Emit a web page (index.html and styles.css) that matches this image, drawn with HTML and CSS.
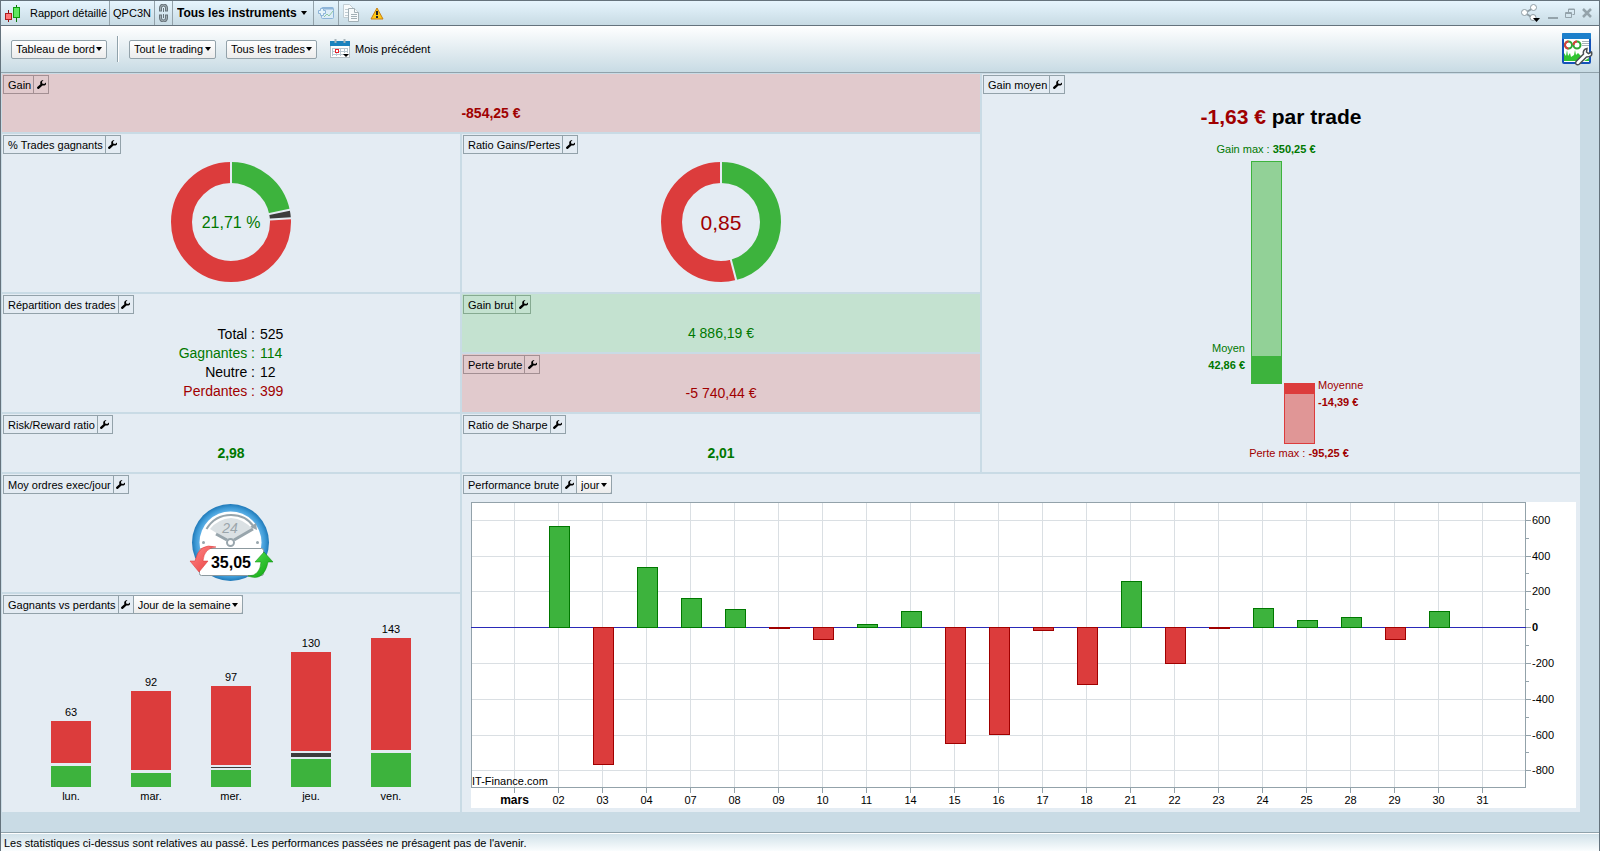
FILE: index.html
```html
<!DOCTYPE html>
<html lang="fr">
<head>
  <meta charset="UTF-8">
  <meta name="viewport" content="width=device-width, initial-scale=1.0">
  <title>Rapport détaillé</title>
  <link rel="stylesheet" href="styles.css">
</head>
<body>

<svg class="defs" aria-hidden="true">
  <symbol id="wrench" viewBox="0 0 9 9">
    <path d="M6.500 0L5 1.700 5.200 3.500 7.200 4 9 2.500Q9.500 5 7.500 5.500L5.500 5.500 2 8.800Q1 9.300 0.300 8.600 -0.300 7.800 0.300 7L3.400 4.200Q2.800 2 4 1 5 0 6.500 0Z"/>
  </symbol>
</svg>

<header class="titlebar">
  <div class="cell title">
    <svg width="16" height="17" viewBox="0 0 16 17">
      <path d="M3.500 5v12" stroke="#8c1010"/>
      <rect x="0.500" y="8.500" width="6" height="6" fill="#f77" stroke="#b01c1c"/>
      <path d="M11.500 0v17" stroke="#0b7a0b"/>
      <rect x="8.500" y="2.500" width="6" height="10" fill="#5fe85f" stroke="#109a10"/>
    </svg>
    <span>Rapport détaillé</span>
  </div>
  <div class="cell account">QPC3N</div>
  <button class="cell link" aria-label="Lier">
    <svg width="9" height="18" viewBox="0 0 9 18" fill="none">
      <path d="M1.500 7.500V4a3 3 0 0 1 6 0v3.500M1.500 10.500V14a3 3 0 0 0 6 0v-3.500" stroke="#68747b" stroke-width="3"/>
      <path d="M4.500 4v4M4.500 10v4" stroke="#68747b"/>
      <path d="M1.500 6.500V4a3 3 0 0 1 6 0v2.500M1.500 11.500V14a3 3 0 0 0 6 0v-2.500" stroke="#a5b0b6"/>
    </svg>
  </button>
  <label class="cell picker instruments">
    <select aria-label="Instruments"><option>Tous les instruments</option></select>
  </label>
  <button class="cell addchart" aria-label="Ajouter un graphique">
    <svg width="16" height="13" viewBox="0 0 16 13">
      <rect x="3.500" y="0.500" width="12" height="11" rx="1" fill="#dcecf8" stroke="#8db4d8"/>
      <path d="M4 1.500h11" stroke="#8db4d8" stroke-width="2"/>
      <path d="M6 10l3-3 2 2 4-5" stroke="#8fc7a2" fill="none"/>
      <path d="M2.500 3.500v-2h3v2h2v3h-2v2h-3v-2h-2v-3z" fill="#e6f4fb" stroke="#8db4d8"/>
    </svg>
  </button>
  <div class="cell tools">
    <button aria-label="Copier">
      <svg width="17" height="18" viewBox="0 0 17 18" fill="#f8fbfc" stroke="#a3b0b6">
        <path d="M0.500 0.500h6l4 4v9h-10z" stroke="#c2ced4"/>
        <path d="M2 5.500h5M2 8.500h4M2 11.500h3" stroke="#c2ced4"/>
        <path d="M5.500 4.500h6l4 4v9h-10z"/>
        <path d="M11.500 4.500v4h4M8 10.500h6M8 12.500h6M8 14.500h6"/>
      </svg>
    </button>
    <button aria-label="Avertissement">
      <svg width="14" height="13" viewBox="0 0 14 13">
        <path d="M7 1L13 12H1Z" fill="#ffc814" stroke="#c87f12" stroke-linejoin="round"/>
        <path d="M7 4v4M7 9v2" stroke="#222" stroke-width="2"/>
      </svg>
    </button>
  </div>
  <div class="window-buttons">
    <button aria-label="Partager">
      <svg width="20" height="18" viewBox="0 0 20 18">
        <path d="M4 9L13 3.500M4 9l8 5" stroke="#8f9da4" stroke-width="2"/>
        <g fill="#fff" stroke="#8f9da4"><circle cx="3.500" cy="8.500" r="3"/><circle cx="12.500" cy="3.500" r="3"/><circle cx="12" cy="13.500" r="3"/></g>
        <path d="M12 14h7l-3.500 4z" fill="#000"/>
      </svg>
    </button>
    <button aria-label="Réduire"><svg width="10" height="12"><path d="M0 11h10" stroke="#94a3ab" stroke-width="2"/></svg></button>
    <button aria-label="Restaurer">
      <svg width="10" height="11" viewBox="0 0 10 11" fill="none" stroke="#94a3ab"><path d="M3.500 4V1h6v5.500h-2M3 1.500h7M0.500 4.500h6v5h-6zM0 5.500h7"/></svg>
    </button>
    <button aria-label="Fermer"><svg width="10" height="10"><path d="M1 1l8 8M9 1l-8 8" stroke="#94a3ab" stroke-width="2.500"/></svg></button>
  </div>
</header>

<nav class="toolbar">
  <label class="picker box"><select aria-label="Vue"><option>Tableau de bord</option></select></label>
  <span class="separator"></span>
  <label class="picker box"><select aria-label="Trading"><option>Tout le trading</option></select></label>
  <label class="picker box"><select aria-label="Trades"><option>Tous les trades</option></select></label>
  <button class="period">
    <svg width="20" height="20" viewBox="0 0 20 20">
      <rect x="0.500" y="2.500" width="19" height="16" fill="#fff" stroke="#b4bfc5"/>
      <rect x="0" y="2" width="20" height="5" fill="#1c82bd"/>
      <path d="M5.500 0v4M14.500 0v4" stroke="#a9b6bc" stroke-width="2"/>
      <path d="M2 9.500h16M2 12.500h16M2 15.500h12M2.500 9v8M6.500 9v8M10.500 9v8M14.500 9v5M17.500 9v5" stroke="#b9c7d0"/>
      <rect x="5.500" y="10.500" width="3" height="3" fill="#fff" stroke="#e8232b"/>
      <path d="M13 15h6l-3 3z" fill="#000"/>
    </svg>
    <span>Mois précédent</span>
  </button>
  <button class="configure" aria-label="Configurer le rapport">
    <svg width="31" height="33" viewBox="0 0 31 33">
      <rect x="1" y="1" width="27" height="29" rx="1" fill="#fff" stroke="#1552b8" stroke-width="2"/>
      <rect x="0" y="0" width="29" height="6" rx="1" fill="#1b7fcb"/>
      <g fill="none" stroke-width="2">
        <circle cx="6.500" cy="12" r="3.500" stroke="#2fa834"/><path d="M6.500 15.500a3.500 3.500 0 0 1 0-7" stroke="#dc3c3c"/>
        <circle cx="15" cy="12" r="3.500" stroke="#2fa834"/><path d="M11.500 12a3.500 3.500 0 0 1 3.500-3.500" stroke="#dc3c3c"/>
      </g>
      <path d="M20 8.500h7M20 10.500h7M20 12.500h7" stroke="#a7b2b8"/>
      <path d="M2 28V20l2 3 1-6 1 6 2-3 1 4 3-2 1-5 1 5 2-2 3 3 2-1v6z" fill="#31c431"/>
      <path d="M22 28h5v-3z" fill="#31c431"/>
      <path d="M14.500 28L21.500 21Q20.500 16.500 25 15.500L24.500 19 26.500 20.500 29.500 19Q31 24 24.500 24L17.500 31Q15.500 32.500 14 31 13 29.500 14.500 28Z" fill="#fff" stroke="#4a4f52" stroke-width="1.500"/>
    </svg>
  </button>
</nav>

<main class="dashboard">
  <section class="panel gain loss">
    <div class="tab"><h2>Gain</h2><button aria-label="Options"><svg><use href="#wrench"/></svg></button></div>
    <p class="value strong red">-854,25 €</p>
  </section>

  <section class="panel average">
    <div class="tab"><h2>Gain moyen</h2><button aria-label="Options"><svg><use href="#wrench"/></svg></button></div>
    <p class="headline"><span class="red">-1,63 €</span> par trade</p>
    <svg class="average-chart" width="200" height="320" viewBox="-2 0 200 320">
      <g class="green">
        <text x="83" y="11" text-anchor="middle">Gain max : <tspan class="bold">350,25 €</tspan></text>
        <rect x="68.500" y="19.500" width="30" height="222" fill="#92d197" stroke="#3db33d"/>
        <rect x="68" y="214" width="31" height="28" fill="#3db33d"/>
        <text x="62" y="210" text-anchor="end">Moyen</text>
        <text x="62" y="227" text-anchor="end" class="bold">42,86 €</text>
      </g>
      <g class="red">
        <rect x="101.500" y="241.500" width="30" height="60" fill="#e09696" stroke="#dc3c3c"/>
        <rect x="101" y="241" width="31" height="11" fill="#dc3c3c"/>
        <text x="135" y="247">Moyenne</text>
        <text x="135" y="264" class="bold">-14,39 €</text>
        <text x="116" y="315" text-anchor="middle">Perte max : <tspan class="bold">-95,25 €</tspan></text>
      </g>
    </svg>
  </section>

  <section class="panel winrate">
    <div class="tab"><h2>% Trades gagnants</h2><button aria-label="Options"><svg><use href="#wrench"/></svg></button></div>
    <svg class="donut" width="120" height="120" viewBox="-60 -60 120 120">
      <g transform="rotate(-90)" fill="none" stroke-width="21">
        <circle r="49.500" stroke="#3db33d" pathLength="100" stroke-dasharray="21.710 78.290"/>
        <circle r="49.500" stroke="#3c3c3c" pathLength="100" stroke-dasharray="2.290 97.710" stroke-dashoffset="-21.710"/>
        <circle r="49.500" stroke="#dc3c3c" pathLength="100" stroke-dasharray="76 24" stroke-dashoffset="-24"/>
      </g>
      <path d="M0 0V-61M0 0L59.700-12.500M0 0L60.900-3.800" stroke="#e4ecf3" stroke-width="2"/>
      <text class="green" y="6" text-anchor="middle" font-size="16">21,71 %</text>
    </svg>
  </section>

  <section class="panel ratio">
    <div class="tab"><h2>Ratio Gains/Pertes</h2><button aria-label="Options"><svg><use href="#wrench"/></svg></button></div>
    <svg class="donut" width="120" height="120" viewBox="-60 -60 120 120">
      <g transform="rotate(-90)" fill="none" stroke-width="21">
        <circle r="49.500" stroke="#3db33d" pathLength="100" stroke-dasharray="45.950 54.050"/>
        <circle r="49.500" stroke="#dc3c3c" pathLength="100" stroke-dasharray="54.050 45.950" stroke-dashoffset="-45.950"/>
      </g>
      <path d="M0 0V-61M0 0L15.400 59" stroke="#e4ecf3" stroke-width="2"/>
      <text class="red" y="8" text-anchor="middle" font-size="21">0,85</text>
    </svg>
  </section>

  <section class="panel split">
    <div class="tab"><h2>Répartition des trades</h2><button aria-label="Options"><svg><use href="#wrench"/></svg></button></div>
    <table class="counts">
      <tr><th>Total :</th><td>525</td></tr>
      <tr class="green"><th>Gagnantes :</th><td>114</td></tr>
      <tr><th>Neutre :</th><td>12</td></tr>
      <tr class="red"><th>Perdantes :</th><td>399</td></tr>
    </table>
  </section>

  <section class="panel gross-gain win">
    <div class="tab"><h2>Gain brut</h2><button aria-label="Options"><svg><use href="#wrench"/></svg></button></div>
    <p class="value green">4 886,19 €</p>
  </section>

  <section class="panel gross-loss loss">
    <div class="tab"><h2>Perte brute</h2><button aria-label="Options"><svg><use href="#wrench"/></svg></button></div>
    <p class="value red">-5 740,44 €</p>
  </section>

  <section class="panel risk">
    <div class="tab"><h2>Risk/Reward ratio</h2><button aria-label="Options"><svg><use href="#wrench"/></svg></button></div>
    <p class="value strong green">2,98</p>
  </section>

  <section class="panel sharpe">
    <div class="tab"><h2>Ratio de Sharpe</h2><button aria-label="Options"><svg><use href="#wrench"/></svg></button></div>
    <p class="value strong green">2,01</p>
  </section>

  <section class="panel orders">
    <div class="tab"><h2>Moy ordres exec/jour</h2><button aria-label="Options"><svg><use href="#wrench"/></svg></button></div>
    <svg class="clock" width="90" height="80" viewBox="0 0 90 80">
      <defs>
        <radialGradient id="ring"><stop offset="0.800" stop-color="#5fb0e6"/><stop offset="0.900" stop-color="#3d9ad6"/><stop offset="1" stop-color="#2079b8"/></radialGradient>
        <linearGradient id="down" x2="1" y2="1"><stop offset="0" stop-color="#ff8a8a"/><stop offset="1" stop-color="#e83c3c"/></linearGradient>
        <linearGradient id="up" x2="1" y2="1"><stop offset="0" stop-color="#58e358"/><stop offset="1" stop-color="#08a008"/></linearGradient>
      </defs>
      <circle cx="44.500" cy="40.500" r="38.500" fill="url(#ring)"/>
      <circle cx="44.500" cy="40.500" r="31" fill="#fff"/>
      <path d="M45 40L24 27Q32 17 45 16 58 17 66 27Z" fill="#dbe1e4"/>
      <path d="M20.500 27Q29 13 45 13 60 13 68 25" fill="none" stroke="#98a5ac" stroke-width="2"/>
      <path d="M64 25l7 3-1-7z" fill="#98a5ac"/>
      <text x="44" y="31" text-anchor="middle" font-size="14" class="hours">24</text>
      <path d="M30 32l11 6M48 38l19-11" stroke="#98a5ac" stroke-width="3"/>
      <circle cx="44.500" cy="40.500" r="3.500" fill="#fff" stroke="#98a5ac" stroke-width="2"/>
      <circle cx="17.500" cy="40.500" r="1.500" fill="#98a5ac"/>
      <circle cx="71.500" cy="40.500" r="1.500" fill="#98a5ac"/>
      <rect x="13.500" y="46.500" width="64" height="27" rx="2" fill="#fff" stroke="#8c999f"/>
      <path d="M30 45Q13 40 9 59L4 59 13 70 22 59 17 59Q18 46 30 45Z" fill="url(#down)" stroke="#d33" stroke-width="0.500"/>
      <path d="M62 74Q78 80 82 60L87 60 78 50 69 60 75 60Q74 74 62 74Z" fill="url(#up)" stroke="#0a8c0a" stroke-width="0.500"/>
      <text x="45" y="66" text-anchor="middle" font-size="16" class="bold">35,05</text>
    </svg>
  </section>

  <section class="panel weekdays">
    <div class="tab">
      <h2>Gagnants vs perdants</h2><button aria-label="Options"><svg><use href="#wrench"/></svg></button>
      <label class="picker box"><select aria-label="Regroupement"><option>Jour de la semaine</option></select></label>
    </div>
    <div class="weekday-chart" id="weekday-chart"></div>
  </section>

  <section class="panel performance">
    <div class="tab">
      <h2>Performance brute</h2><button aria-label="Options"><svg><use href="#wrench"/></svg></button>
      <label class="picker box"><select aria-label="Période"><option>jour</option></select></label>
    </div>
    <svg class="performance-chart" id="performance-chart" viewBox="0 0 1105 306"></svg>
  </section>
</main>

<footer class="status">Les statistiques ci-dessus sont relatives au passé. Les performances passées ne présagent pas de l'avenir.</footer>

<script src="charts.js"></script>
</body>
</html>
```
FILE: styles.css
```css
* {
  box-sizing: border-box;
}

body {
  margin: 0;
  min-height: 100vh;
  display: flex;
  flex-direction: column;
  border: 1px solid #65737d;
  border-bottom: 0;
  background: #c9dbe5;
  color: #000;
  font-family: "Liberation Sans", Arial, sans-serif;
  font-size: 11px;
  line-height: 14px;
}

h2,
p {
  margin: 0;
  font-size: inherit;
  font-weight: normal;
}

button {
  display: flex;
  align-items: center;
  padding: 0;
  border: 0;
  background: none;
  color: inherit;
  font: inherit;
}

svg {
  display: block;
  flex: none;
}

text {
  fill: currentColor;
}

.defs {
  position: absolute;
  width: 0;
  height: 0;
}

.bold {
  font-weight: bold;
}

.green {
  color: #007800;
}

.red {
  color: #a00000;
}

/* drop-downs */
.picker {
  position: relative;
  display: flex;
  align-items: center;
}

.picker::after {
  content: "";
  position: absolute;
  right: 4px;
  top: 50%;
  margin-top: -2px;
  border: 3px solid transparent;
  border-top: 4px solid #000;
  border-bottom: 0;
  pointer-events: none;
}

.picker select {
  appearance: none;
  height: 100%;
  padding: 0 11px 0 4px;
  border: 0;
  background: none;
  color: inherit;
  font: inherit;
}

.picker.box {
  height: 19px;
  border: 1px solid #93a2aa;
  border-radius: 2px;
  background: linear-gradient(#fff, #ececec);
}

/* title bar */
.titlebar {
  display: flex;
  height: 25px;
  border-bottom: 1px solid #65737d;
  background: linear-gradient(#e6f5fe, #c8dbe4);
}

.cell {
  display: flex;
  align-items: center;
  justify-content: center;
  border-right: 1px solid #93a2aa;
}

.title {
  gap: 9px;
  padding: 0 2px 0 4px;
}

.account {
  padding: 0 3px;
}

.link {
  width: 18px;
}

.instruments {
  font-size: 12px;
  font-weight: bold;
}

.instruments select {
  padding-right: 16px;
}

.instruments::after {
  right: 6px;
}

.addchart {
  width: 25px;
}

.tools {
  gap: 10px;
  padding-left: 4px;
  border: 0;
}

.window-buttons {
  display: flex;
  align-items: center;
  gap: 7px;
  margin-left: auto;
  padding-right: 7px;
}

/* toolbar */
.toolbar {
  display: flex;
  align-items: center;
  gap: 10px;
  height: 47px;
  padding: 0 6px 0 10px;
  border-bottom: 1px solid #90a2ab;
  background: linear-gradient(#fff, #c8dbe4);
}

.separator {
  width: 2px;
  height: 26px;
  border-left: 1px solid #90a2ab;
  background: #fff;
}

.period {
  gap: 5px;
  margin-left: 3px;
}

.configure {
  margin-left: auto;
}

/* dashboard */
.dashboard {
  flex: 1;
  display: grid;
  grid-template-columns: 458fr 518fr 598fr;
  grid-template-rows: 58px 158px 58px 58px 58px 118px minmax(218px, 1fr);
  grid-template-areas:
    "gain gain average"
    "winrate ratio average"
    "split ggain average"
    "split gloss average"
    "risk sharpe average"
    "orders perf perf"
    "week perf perf";
  gap: 2px;
  padding: 1px 19px 20px 1px;
}

.gain { grid-area: gain; }
.average { grid-area: average; }
.winrate { grid-area: winrate; }
.ratio { grid-area: ratio; }
.split { grid-area: split; }
.gross-gain { grid-area: ggain; }
.gross-loss { grid-area: gloss; }
.risk { grid-area: risk; }
.sharpe { grid-area: sharpe; }
.orders { grid-area: orders; }
.weekdays { grid-area: week; }
.performance { grid-area: perf; }

.panel {
  display: flex;
  flex-direction: column;
  align-items: center;
  min-width: 0;
  background: #e4ecf3;
  --line: #93a2aa;
}

.panel.loss {
  background: #e1cacd;
  --line: #a38f93;
}

.panel.win {
  background: #c4e2d0;
  --line: #86aa91;
}

.tab {
  display: flex;
  align-self: flex-start;
  height: 19px;
  margin: 1px 0 0 1px;
  border: 1px solid var(--line);
}

.tab h2 {
  padding: 2px 2px 0 4px;
}

.tab > button {
  justify-content: center;
  width: 15px;
  border-left: 1px solid var(--line);
}

.tab > button svg {
  width: 9px;
  height: 9px;
}

.tab .picker.box {
  margin: -1px;
  margin-left: 0;
  border-radius: 0 2px 2px 0;
}

.value {
  margin: auto;
  font-size: 14px;
  line-height: 18px;
}

.strong {
  font-weight: bold;
}

.donut,
.clock {
  margin-top: 8px;
}

.hours {
  color: #9aa5ab;
  font-style: italic;
}

.headline {
  margin: 11px 0 13px;
  font-size: 21px;
  font-weight: bold;
  line-height: 24px;
}

.counts {
  margin: auto;
  border-spacing: 0;
  font-size: 14px;
  line-height: 19px;
}

.counts th {
  padding: 0 5px 0 0;
  font-weight: normal;
  text-align: right;
}

.counts td {
  padding: 0;
}

/* winners and losers by weekday */
.weekday-chart {
  flex: 1;
  display: flex;
  align-items: flex-end;
  padding-bottom: 9px;
}

.day {
  width: 80px;
  text-align: center;
}

.stack {
  display: flex;
  flex-direction: column;
  gap: 3px;
  width: 40px;
  margin: 2px auto;
}

.stack .lost { background: #dc3c3c; }
.stack .won { background: #3db33d; }

.stack .neutral {
  margin: -1px 0;
  background: #3c3c3c;
}

/* performance chart */
.performance-chart {
  align-self: stretch;
  margin: 8px 4px 4px 9px;
  background: #fff;
  font-size: 11px;
}

.performance-chart path,
.performance-chart rect {
  shape-rendering: crispEdges;
}

.grid { stroke: #dadfe3; }
.axis { fill: none; stroke: #93a2aa; }
.zero { stroke: #2a2ab8; }
.up { fill: #3db33d; stroke: #007800; }
.down { fill: #dc3c3c; stroke: #a00000; }

.performance-chart .month {
  font-size: 12px;
  font-weight: bold;
}

.status {
  height: 19px;
  padding: 3px 3px 0;
  border-top: 1px solid #90a2ab;
  background: linear-gradient(#cfe0e8, #fafdfe);
  box-shadow: inset 0 1px #fff;
}
```
FILE: charts.js
```js
// heights of the lost / neutral / won segments, in pixels
const weekdays = [
  { name: 'lun.', total: 63, lost: 42, neutral: 0, won: 21 },
  { name: 'mar.', total: 92, lost: 79, neutral: 0, won: 14 },
  { name: 'mer.', total: 97, lost: 79, neutral: 1, won: 17 },
  { name: 'jeu.', total: 130, lost: 99, neutral: 4, won: 28 },
  { name: 'ven.', total: 143, lost: 112, neutral: 0, won: 34 }
];

document.getElementById('weekday-chart').innerHTML = weekdays.map(day => {
  const segments = ['lost', 'neutral', 'won']
    .filter(kind => day[kind] > 0)
    .map(kind => `<div class="${kind}" style="height: ${day[kind]}px"></div>`)
    .join('');
  return `<div class="day">${day.total}<div class="stack">${segments}</div>${day.name}</div>`;
}).join('');

const results = [
  ['mars', 0], ['02', 565], ['03', -767], ['04', 336], ['07', 162], ['08', 101],
  ['09', -5], ['10', -67], ['11', 15], ['14', 90], ['15', -650], ['16', -598],
  ['17', -18], ['18', -319], ['21', 257], ['22', -202], ['23', -5], ['24', 106],
  ['25', 39], ['28', 56], ['29', -68], ['30', 90], ['31', 0]
];

const right = 1054.5;
const bottom = 285.5;
const yOf = value => Math.round(125.12 - value * 0.179) + 0.5;
const xOf = index => 43.5 + 44 * index;

let grid = '';
let ticks = '';
let bars = '';
let labels = '';

for (let value = 600; value >= -800; value -= 100) {
  const y = yOf(value);
  if (value % 200) {
    ticks += `M${right} ${y}h3`;
    continue;
  }
  grid += `M0 ${y}H${right}`;
  ticks += `M${right} ${y}h5`;
  labels += `<text x="1061" y="${y + 3.5}"${value === 0 ? ' class="bold"' : ''}>${value}</text>`;
}

results.forEach(([day, value], i) => {
  const x = xOf(i);
  grid += `M${x} 0V${bottom}`;
  ticks += `M${x} ${bottom}v5`;
  labels += `<text x="${x}" y="302" text-anchor="middle"${i === 0 ? ' class="month"' : ''}>${day}</text>`;
  if (value !== 0) {
    const top = Math.min(yOf(value), yOf(0));
    const height = Math.abs(yOf(value) - yOf(0));
    bars += `<rect class="${value > 0 ? 'up' : 'down'}" x="${x - 9}" y="${top}" width="20" height="${height}"/>`;
  }
});

document.getElementById('performance-chart').innerHTML = `
  <path class="grid" d="${grid}"/>
  <path class="axis" d="M0.5 0.5H${right}V${bottom}H0.5Z${ticks}"/>
  <path class="zero" d="M0 ${yOf(0)}H${right}"/>
  ${bars}
  ${labels}
  <text x="1" y="283">IT-Finance.com</text>`;
```
